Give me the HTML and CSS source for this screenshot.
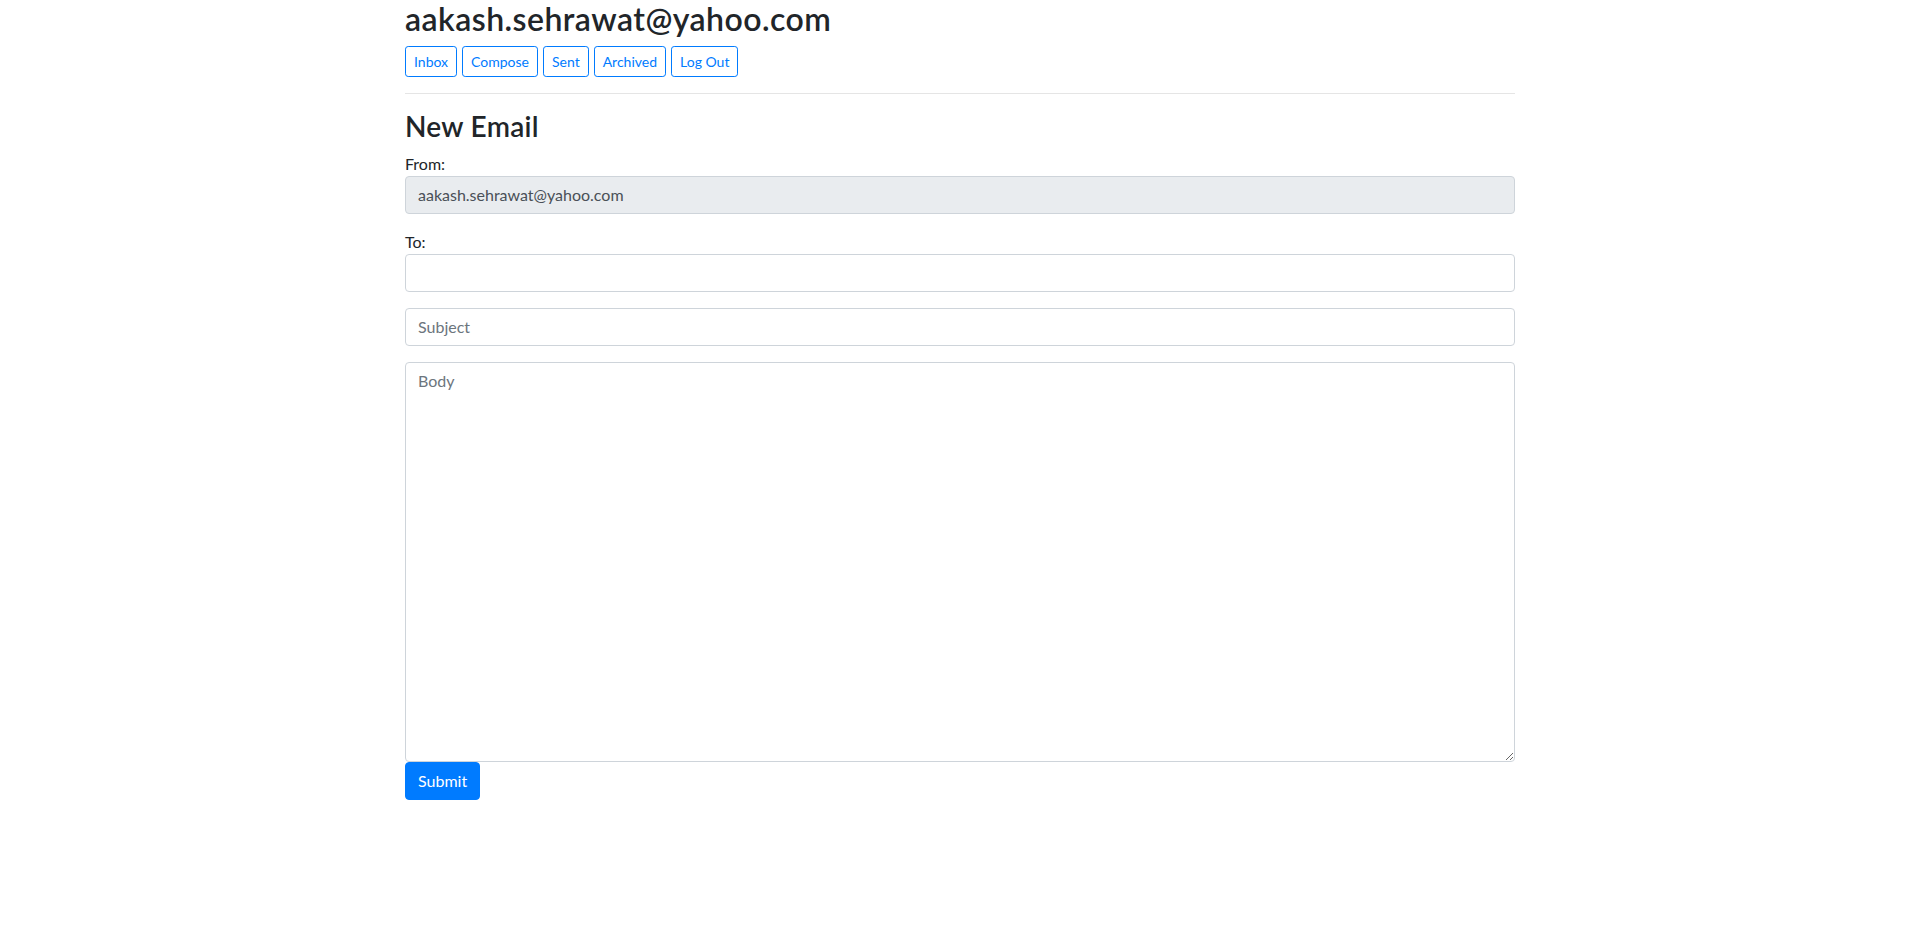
FILE: index.html
```html
<!DOCTYPE html>
<html lang="en">
<head>
<meta charset="utf-8">
<title>Mail</title>
<link rel="stylesheet" href="styles.css">
</head>
<body>
<div class="container">
  <h2 class="user">aakash.sehrawat@yahoo.com</h2>
  <nav class="nav-buttons">
    <button class="btn-sm">Inbox</button>
    <button class="btn-sm">Compose</button>
    <button class="btn-sm">Sent</button>
    <button class="btn-sm">Archived</button>
    <a class="btn-sm" href="#">Log Out</a>
  </nav>
  <hr class="divider">
  <div class="compose-view">
    <h3 class="title">New Email</h3>
    <form class="compose-form">
      <div class="form-group">
        From: <input disabled class="form-control" value="aakash.sehrawat@yahoo.com">
      </div>
      <div class="form-group">
        To: <input class="form-control">
      </div>
      <div class="form-group">
        <input class="form-control" placeholder="Subject">
      </div>
      <textarea class="form-control body-area" placeholder="Body"></textarea>
      <input type="submit" class="btn-primary" value="Submit">
    </form>
  </div>
</div>
</body>
</html>
```

FILE: styles.css
```css
*, *::before, *::after { box-sizing: border-box; }
html, body { margin: 0; }
body {
  font-family: "Lato", "Open Sans", sans-serif;
  font-size: 16px;
  line-height: 1.5;
  color: #212529;
  background: #fff;
}
.container {
  width: 1140px;
  margin: 0 auto;
  padding: 0 15px;
}
.user {
  margin: 0 0 8px;
  font-size: 32px;
  font-weight: 600;
  letter-spacing: 0.45px;
  line-height: 1.2;
}
.nav-buttons {
  display: flex;
  gap: 5px;
}
.btn-sm {
  display: inline-block;
  font-family: inherit;
  font-size: 14px;
  line-height: 1.5;
  padding: 4px 8px;
  border: 1px solid #007bff;
  border-radius: 3.2px;
  background: #fff;
  color: #007bff;
  text-decoration: none;
  cursor: pointer;
}
.divider {
  margin: 16px 0;
  border: 0;
  border-top: 1px solid rgba(0,0,0,.1);
}
.title {
  margin: 0 0 8px;
  font-size: 28px;
  font-weight: 600;
  letter-spacing: 0.3px;
  line-height: 1.2;
}
.compose-form { margin: 0; }
.form-group { margin-bottom: 16px; }
.form-control {
  display: block;
  width: 100%;
  height: 38px;
  padding: 6px 12px;
  font-family: inherit;
  font-size: 16px;
  line-height: 1.5;
  color: #495057;
  background: #fff;
  border: 1px solid #ced4da;
  border-radius: 4px;
  margin: 0;
}
.form-control::placeholder { color: #6c757d; opacity: 1; }
.form-control:disabled { background: #e9ecef; opacity: 1; color: #495057; }
.body-area {
  height: 400px;
  resize: vertical;
}
.btn-primary {
  display: inline-block;
  font-family: inherit;
  font-size: 16px;
  line-height: 1.5;
  padding: 6px 12px;
  border: 1px solid #007bff;
  border-radius: 4px;
  background: #007bff;
  color: #fff;
  margin: 0;
  cursor: pointer;
}
```
